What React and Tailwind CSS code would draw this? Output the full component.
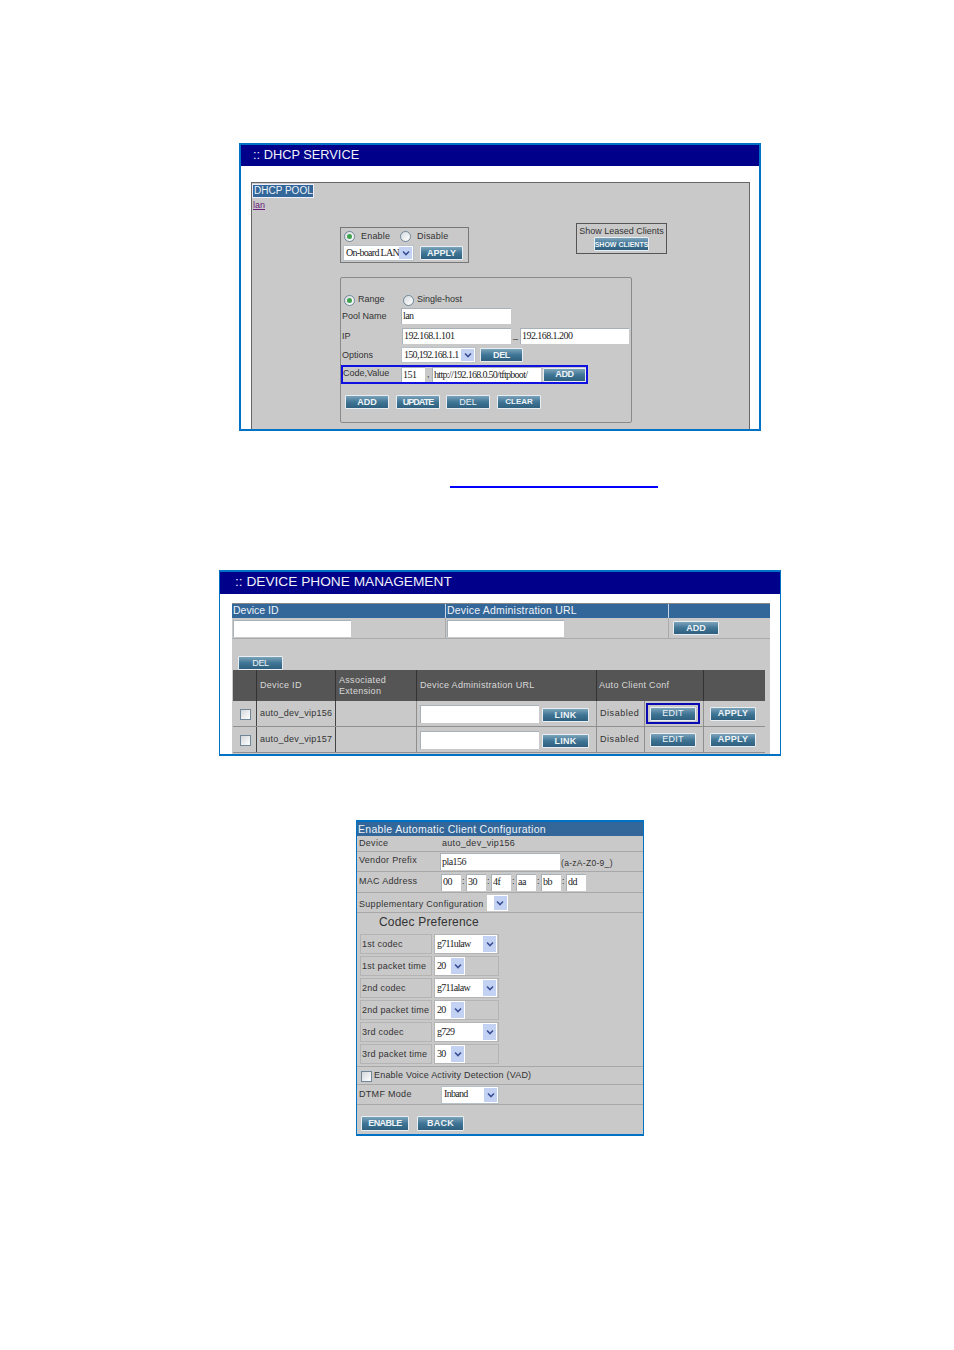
import React from "react";

const Btn = ({ w = 44, label, className = "", big = false }) => (
  <div
    style={{ width: w }}
    className={`h-[14px] shrink-0 border border-[#e8eef2] rounded-[1px] bg-gradient-to-b from-[#7ba3bb] via-[#3f7595] to-[#2f5f7e] flex items-center justify-center font-['Liberation_Sans',sans-serif] font-bold text-[#eef3f6] leading-none text-[9px] ${big ? "tracking-[-0.3px]" : ""} ${className}`}
  >
    {label}
  </div>
);

const Chevron = () => (
  <div className="w-[13px] h-full shrink-0 bg-[#c3d2f2] flex items-center justify-center">
    <svg width="8" height="6" viewBox="0 0 8 6" fill="none">
      <path d="M1 1.5 L4 4.5 L7 1.5" stroke="#3a4f96" strokeWidth="1.6" />
    </svg>
  </div>
);

const Select = ({ w, h = 17, value, className = "" }) => (
  <div
    style={{ width: w, height: h }}
    className={`shrink-0 bg-white border border-[#b8c0c8] flex items-center justify-between p-[1px] ${className}`}
  >
    <span className="pl-[1px] pb-[2px] font-['Liberation_Serif',serif] text-[10px] tracking-[-0.7px] text-[#222] whitespace-nowrap">
      {value}
    </span>
    <Chevron />
  </div>
);

const Input = ({ w, h = 16, value = "", className = "" }) => (
  <div
    style={{ width: w, height: h }}
    className={`shrink-0 bg-white border-t border-l border-[#a8b0b8] flex items-center pl-[1px] pb-[2px] font-['Liberation_Serif',serif] text-[10px] tracking-[-0.55px] text-[#222] whitespace-nowrap overflow-hidden ${className}`}
  >
    {value}
  </div>
);

const Radio = ({ on }) => (
  <div className="w-[11px] h-[11px] rounded-full border border-[#6f8798] bg-gradient-to-br from-[#d8dde0] to-white shrink-0 flex items-center justify-center">
    {on && <div className="w-[5px] h-[5px] rounded-full bg-[#3fa34d]" />}
  </div>
);

const Check = ({ className = "" }) => (
  <div className={`w-[11px] h-[11px] border border-[#6f8798] bg-gradient-to-br from-[#d4d8dc] to-white shrink-0 ${className}`} />
);

const Title = ({ h, size, pl, pb = 0, children }) => (
  <div
    style={{ height: h, paddingLeft: pl, paddingBottom: pb, fontSize: size }}
    className="bg-[#00008b] text-[#f0f0f8] flex items-center font-['Liberation_Sans',sans-serif] whitespace-nowrap"
  >
    {children}
  </div>
);

function Dhcp() {
  return (
    <div className="ml-[239px] w-[522px] h-[288px] border-2 border-[#0072c6] bg-white text-[9px] text-[#333] font-['Liberation_Sans',sans-serif]">
      <Title h={21} size={12.8} pl={12} pb={2}>:: DHCP SERVICE</Title>
      <div className="pt-[16px] pl-[10px] pr-[9px]">
        <div className="h-[247px] bg-[#c9c9c9] border border-b-0 border-[#666]">
          <div className="mt-[1px] w-[62px] h-[14px] bg-[#336699] border border-[#eef] text-[#eef3f8] text-[10px] leading-[12px] pl-[1px] whitespace-nowrap">
            DHCP POOL
          </div>
          <div className="h-[12px] mt-[1px] leading-[12px] pl-[1px] text-[#6b1a7a] underline">lan</div>
          <div className="mt-[12px] flex items-start">
            <div className="ml-[88px] mt-[4px] w-[129px] h-[36px] border border-[#777] px-[2px] flex flex-col">
              <div className="flex items-center h-[17px] pl-[1px] tracking-[0.2px]">
                <Radio on />
                <span className="ml-[6px] w-[39px] shrink-0">Enable</span>
                <Radio />
                <span className="ml-[6px]">Disable</span>
              </div>
              <div className="flex items-center gap-[6px]">
                <Select w={71} h={16} value="On-board LAN" />
                <Btn w={43} label="APPLY" />
              </div>
            </div>
            <div className="ml-[107px] w-[91px] h-[31px] border border-[#555] flex flex-col items-center pt-[2px]">
              <div className="leading-[11px] whitespace-nowrap">Show Leased Clients</div>
              <Btn w={55} label="SHOW CLIENTS" className="!text-[7px] whitespace-nowrap" />
            </div>
          </div>
          <div className="ml-[88px] mt-[14px] w-[292px] h-[146px] border border-[#8a8a8a] rounded-[2px] pt-[15px]">
            <div className="flex items-center h-[14px] pl-[3px]">
              <Radio on />
              <span className="ml-[3px] w-[45px]">Range</span>
              <Radio />
              <span className="ml-[3px]">Single-host</span>
            </div>
            <div className="mt-[1px] flex items-center pl-[1px]">
              <span className="w-[59px] pt-[2px]">Pool Name</span>
              <Input w={110} value="lan" />
            </div>
            <div className="mt-[4px] flex items-center pl-[1px]">
              <span className="w-[60px] pt-[2px]">IP</span>
              <Input w={109} value="192.168.1.101" />
              <span className="w-[9px] pl-[2px]">_</span>
              <Input w={109} value="192.168.1.200" />
            </div>
            <div className="mt-[3px] flex items-center pl-[1px]">
              <span className="w-[59px] pt-[2px]">Options</span>
              <Select w={75} h={16} value="150,192.168.1.1" />
              <Btn w={43} label="DEL" big className="ml-[4px]" />
            </div>
            <div className="mt-[2px] w-[247px] h-[19px] border-2 border-[#1010e0] flex items-center">
              <span className="w-[58px] shrink-0 pb-[1px]">Code,Value</span>
              <Input w={24} h={15} value="151" />
              <span className="w-[7px] pl-[2px]">,</span>
              <Input w={109} h={15} value="http://192.168.0.50/tftpboot/" className="!tracking-[-0.7px]" />
              <Btn w={43} h={13} label="ADD" big className="ml-[2px]" />
            </div>
            <div className="mt-[11px] ml-[4px] flex">
              <Btn w={44} label="ADD" />
              <Btn w={44} label="UPDATE" className="ml-[7px] !tracking-[-1px]" />
              <Btn w={44} label="DEL" className="ml-[6px] font-normal" />
              <Btn w={44} label="CLEAR" className="ml-[7px] !text-[8px]" />
            </div>
          </div>
        </div>
      </div>
    </div>
  );
}

const PhoneRow = ({ name, hi }) => (
  <div className="grid grid-cols-[24px_79px_81px_180px_107px_61px] h-[26px] border-b border-[#8f8f8f] text-[9px] text-[#333] tracking-[0.3px]">
    <div className="border-r border-[#444] flex items-center justify-center pt-[2px] pl-[1px]"><Check /></div>
    <div className="border-r border-[#444] flex items-center pl-[3px] pt-[1px] whitespace-nowrap tracking-[0.25px]">{name}</div>
    <div className="border-r border-[#8f8f8f]" />
    <div className="border-r border-[#8f8f8f] flex items-center pl-[3px]">
      <Input w={119} h={18} />
      <Btn w={47} label="LINK" className="ml-[3px] mt-[3px]" />
    </div>
    <div className="border-r border-[#8f8f8f] flex items-center">
      <div className="w-[48px] pl-[3px] pt-[1px] h-full flex items-center border-r border-[#8f8f8f] tracking-[0.55px]">Disabled</div>
      <div className={`ml-[1px] w-[54px] h-[21px] flex items-center justify-center ${hi ? "border-2 border-[#0a0ab4]" : ""}`}>
        <Btn w={46} label="EDIT" className="font-normal" />
      </div>
    </div>
    <div className="flex items-center pl-[6px]"><Btn w={46} label="APPLY" /></div>
  </div>
);

function Phone() {
  return (
    <div className="ml-[219px] mt-[82px] w-[562px] h-[186px] border-y-2 border-x border-[#0072c6] bg-white overflow-hidden font-['Liberation_Sans',sans-serif]">
      <Title h={22} size={13.7} pl={15} pb={2}>:: DEVICE PHONE MANAGEMENT</Title>
      <div className="pt-[9px] pl-[12px] pr-[10px]">
        <div className="h-[152px] bg-[#c9c9c9] border-t border-[#888]">
          <div className="grid grid-cols-[214px_223px_1fr] h-[14px] bg-[#336699] text-[#eef3f8] text-[10.5px] leading-[12px] whitespace-nowrap">
            <div className="pl-[1px] border-r border-[#c9d6e2]">Device ID</div>
            <div className="pl-[1px] border-r border-[#c9d6e2] tracking-[0.2px]">Device Administration URL</div>
            <div />
          </div>
          <div className="grid grid-cols-[214px_223px_1fr] h-[21px] border-b border-[#aaa]">
            <div className="pl-[1px] pt-[2px] border-r border-[#aaa]"><Input w={118} h={17} /></div>
            <div className="pl-[1px] pt-[2px] border-r border-[#aaa]"><Input w={117} h={17} /></div>
            <div className="pl-[4px] pt-[3px]"><Btn w={46} label="ADD" /></div>
          </div>
          <div className="pl-[6px] pt-[17px]"><Btn w={45} label="DEL" big className="font-normal" /></div>
          <div className="ml-[1px] w-[532px] text-[9px]">
            <div className="grid grid-cols-[24px_79px_81px_180px_107px_61px] h-[31px] bg-[#555] text-[#d8d8d8] tracking-[0.3px]">
              <div className="border-r border-[#333]" />
              <div className="border-r border-[#333] pl-[3px] flex items-center">Device ID</div>
              <div className="border-r border-[#333] pl-[3px] flex items-center leading-[11px]">Associated<br />Extension</div>
              <div className="border-r border-[#333] pl-[3px] flex items-center">Device Administration URL</div>
              <div className="border-r border-[#333] pl-[2px] flex items-center whitespace-nowrap">Auto Client Conf</div>
              <div />
            </div>
            <PhoneRow name="auto_dev_vip156" hi />
            <PhoneRow name="auto_dev_vip157" />
          </div>
        </div>
      </div>
    </div>
  );
}

const Row = ({ h, children, className = "" }) => (
  <div style={{ height: h }} className={`border-b border-[#a8a8a8] flex items-center pl-[2px] ${className}`}>
    {children}
  </div>
);

const CodecRow = ({ label, value, short }) => (
  <div className="flex gap-[2px] h-[20px] mb-[2px] ml-[3px]">
    <div className="w-[72px] border border-[#b4b4b4] flex items-center pl-[1px] pt-[2px] whitespace-nowrap tracking-[0.25px]">{label}</div>
    <div className="w-[65px] border border-[#b4b4b4] flex items-center">
      <Select w={short ? 30 : 62} h={18} value={value} className="!border-0" />
    </div>
  </div>
);

function Client() {
  return (
    <div className="ml-[356px] mt-[64px] w-[288px] h-[316px] border-y-2 border-x border-[#0072c6] bg-[#c9c9c9] text-[9px] text-[#333] font-['Liberation_Sans',sans-serif] tracking-[0.3px]">
      <div className="h-[14px] bg-[#336699] text-[#eef3f8] text-[10.5px] leading-[14px] pl-[1px] whitespace-nowrap tracking-[0.3px]">
        Enable Automatic Client Configuration
      </div>
      <Row h={16}>
        <span className="w-[83px]">Device</span>
        <span>auto_dev_vip156</span>
      </Row>
      <Row h={20}>
        <span className="w-[81px] pb-[1px]">Vendor Prefix</span>
        <Input w={120} h={17} value="pla156" />
        <span className="ml-[1px] mt-[3px] text-[8.5px] tracking-[0.3px] whitespace-nowrap">(a-zA-Z0-9_)</span>
      </Row>
      <Row h={21}>
        <span className="w-[82px] whitespace-nowrap">MAC Address</span>
        {["00", "30", "4f", "aa", "bb", "dd"].map((v, i) => (
          <React.Fragment key={v}>
            {i > 0 && <span className="w-[5px] pl-[1px]">:</span>}
            <Input w={20} h={17} value={v} />
          </React.Fragment>
        ))}
      </Row>
      <Row h={20}>
        <span className="whitespace-nowrap mt-[4px] tracking-[0.3px]">Supplementary Configuration</span>
        <Select w={21} h={16} value="" className="ml-[3px] !border-0" />
      </Row>
      <div className="h-[21px] pl-[22px] text-[12px] leading-[19px] tracking-[0.2px]">Codec Preference</div>
      <CodecRow label="1st codec" value="g711ulaw" />
      <CodecRow label="1st packet time" value="20" short />
      <CodecRow label="2nd codec" value="g711alaw" />
      <CodecRow label="2nd packet time" value="20" short />
      <CodecRow label="3rd codec" value="g729" />
      <CodecRow label="3rd packet time" value="30" short />
      <div className="border-t border-[#a8a8a8] h-[18px] mt-[2px] flex items-center pl-[4px] pt-[1px] whitespace-nowrap tracking-[0.2px]">
        <Check />
        <span className="ml-[2px]">Enable Voice Activity Detection (VAD)</span>
      </div>
      <div className="border-y border-[#a8a8a8] h-[21px] flex items-center pl-[2px]">
        <span className="w-[82px] pt-[1px]">DTMF Mode</span>
        <Select w={58} h={18} value="Inband" />
      </div>
      <div className="flex pl-[4px] pt-[11px]">
        <Btn w={48} label="ENABLE" className="h-[15px] !tracking-[-0.6px]" />
        <Btn w={47} label="BACK" className="ml-[8px] h-[15px]" />
      </div>
    </div>
  );
}

export default function App() {
  return (
    <div className="w-[954px] h-[1350px] bg-white pt-[143px] overflow-hidden">
      <Dhcp />
      <div className="ml-[450px] mt-[55px] w-[208px] h-[2px] bg-[#0000ff]" />
      <Phone />
      <Client />
    </div>
  );
}
